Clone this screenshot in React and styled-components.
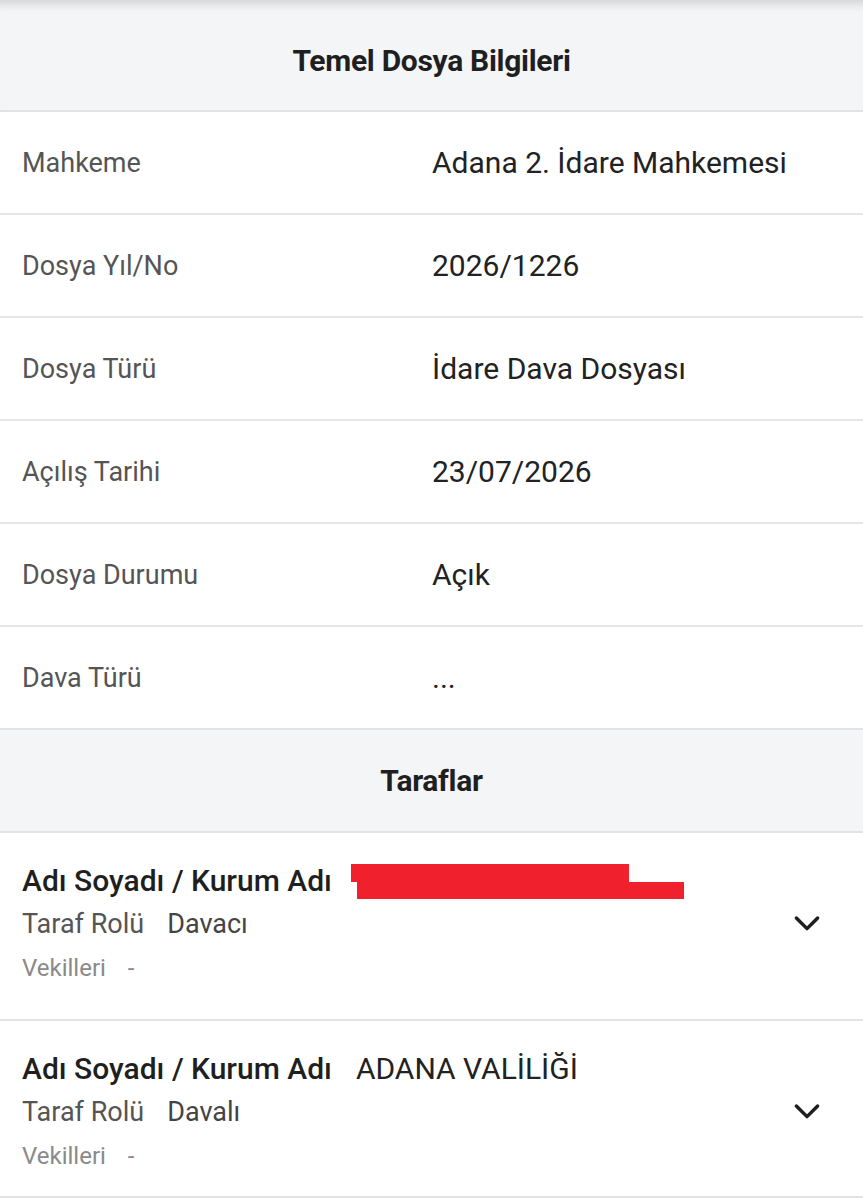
import React from "react";
import styled, { createGlobalStyle } from "styled-components";

const GlobalStyle = createGlobalStyle`
	body {
		margin: 0;
		background: #ffffff;
		font-family: Roboto, "Noto Sans", sans-serif;
	}
`;

const Page = styled.div`
	width: 863px;
	background: #ffffff;
`;

const SectionHeader = styled.div`
	display: flex;
	align-items: center;
	justify-content: center;
	height: ${(props) => (props.top ? "100px" : "101px")};
	padding-top: ${(props) => (props.top ? "10px" : "0")};
	background: #f4f5f7;
	border-top: ${(props) => (props.top ? "none" : "2px solid #e3e3e5")};
	border-bottom: 2px solid #e3e3e5;
	box-shadow: ${(props) =>
		props.top ? "inset 0 12px 10px -8px rgba(0, 0, 0, 0.14)" : "none"};
`;

const SectionTitle = styled.h2`
	margin: 0;
	font-size: 30px;
	font-weight: 700;
	color: #1f1f1f;
	letter-spacing: -0.3px;
`;

const InfoRow = styled.div`
	display: grid;
	grid-template-columns: 410px 1fr;
	align-items: center;
	height: 101px;
	padding-left: 22px;
	border-bottom: ${(props) => (props.last ? "none" : "2px solid #e6e6e6")};
`;

const Label = styled.span`
	font-size: 27px;
	color: #555555;
`;

const Value = styled.span`
	font-size: 30px;
	color: #222222;
`;

const PartyCard = styled.div`
	display: flex;
	align-items: center;
	justify-content: space-between;
	padding: 25px 41px ${(props) => props.bottom}px 22px;
	border-bottom: 2px solid #e3e3e5;
`;

const PartyInfo = styled.div`
	display: flex;
	flex-direction: column;
`;

const PartyLine = styled.div`
	display: flex;
	align-items: center;
	height: 44px;
	gap: ${(props) => props.gap || 23}px;
`;

const NameLabel = styled.span`
	font-size: 30px;
	font-weight: 500;
	color: #1f1f1f;
`;

const NameValue = styled.span`
	font-size: 30px;
	color: #222222;
	margin-left: 5px;
`;

const RoleText = styled.span`
	font-size: 27px;
	color: ${(props) => (props.value ? "#444444" : "#555555")};
`;

const LawyerText = styled.span`
	font-size: 24px;
	color: #8a8a8a;
`;

const Redacted = styled.div`
	display: flex;
	flex-direction: column;
	margin-top: 2px;
`;

const RedBarTop = styled.div`
	width: 278px;
	height: 18px;
	background: #f0202d;
`;

const RedBarBottom = styled.div`
	width: 327px;
	height: 17px;
	margin-left: 6px;
	background: #f0202d;
`;

const Chevron = styled.svg`
	width: 30px;
	height: 30px;
	flex-shrink: 0;
	margin-top: -2px;
`;

const ChevronIcon = () => (
	<Chevron viewBox="0 0 24 24" fill="none">
		<path
			d="M3.5 8l8.5 8.5 8.5-8.5"
			stroke="#1f1f1f"
			strokeWidth="2.8"
			strokeLinecap="round"
			strokeLinejoin="round"
		/>
	</Chevron>
);

const infoRows = [
	{ label: "Mahkeme", value: "Adana 2. İdare Mahkemesi" },
	{ label: "Dosya Yıl/No", value: "2026/1226" },
	{ label: "Dosya Türü", value: "İdare Dava Dosyası" },
	{ label: "Açılış Tarihi", value: "23/07/2026" },
	{ label: "Dosya Durumu", value: "Açık" },
	{ label: "Dava Türü", value: "..." },
];

const parties = [
	{ name: null, role: "Davacı", bottom: 29 },
	{ name: "ADANA VALİLİĞİ", role: "Davalı", bottom: 18 },
];

const App = () => {
	return (
		<Page>
			<GlobalStyle />
			<SectionHeader top>
				<SectionTitle>Temel Dosya Bilgileri</SectionTitle>
			</SectionHeader>
			{infoRows.map(({ label, value }, index) => (
				<InfoRow key={label} last={index === infoRows.length - 1}>
					<Label>{label}</Label>
					<Value>{value}</Value>
				</InfoRow>
			))}
			<SectionHeader>
				<SectionTitle>Taraflar</SectionTitle>
			</SectionHeader>
			{parties.map(({ name, role, bottom }, index) => (
				<PartyCard key={index} bottom={bottom}>
					<PartyInfo>
						<PartyLine gap={19}>
							<NameLabel>Adı Soyadı / Kurum Adı</NameLabel>
							{name ? (
								<NameValue>{name}</NameValue>
							) : (
								<Redacted>
									<RedBarTop />
									<RedBarBottom />
								</Redacted>
							)}
						</PartyLine>
						<PartyLine>
							<RoleText>Taraf Rolü</RoleText>
							<RoleText value="1">{role}</RoleText>
						</PartyLine>
						<PartyLine gap={22}>
							<LawyerText>Vekilleri</LawyerText>
							<LawyerText>-</LawyerText>
						</PartyLine>
					</PartyInfo>
					<ChevronIcon />
				</PartyCard>
			))}
		</Page>
	);
};

export default App;
